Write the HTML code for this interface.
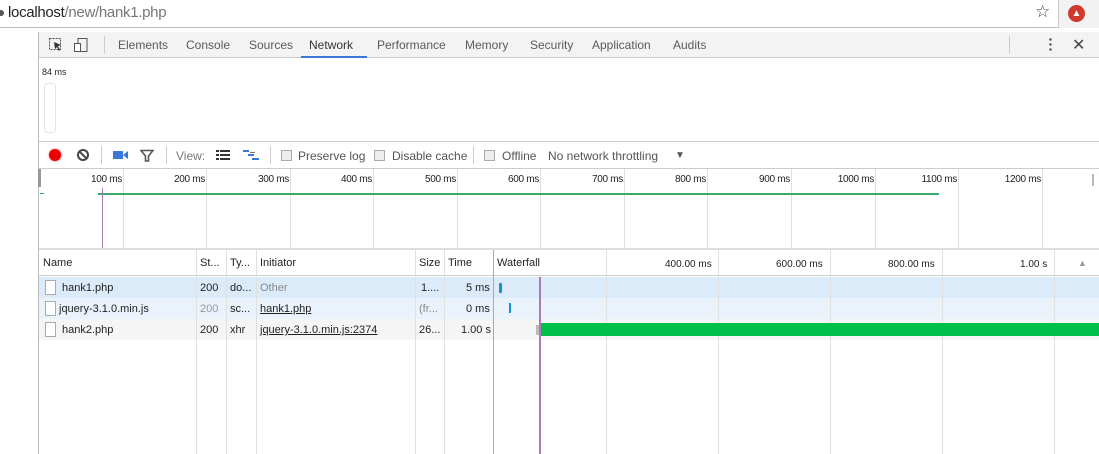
<!DOCTYPE html>
<html><head><meta charset="utf-8"><style>
*{margin:0;padding:0;box-sizing:border-box}
body{width:1099px;height:454px;overflow:hidden;background:#fff;font-family:"Liberation Sans",Arial,sans-serif;font-size:12px;color:#333;position:relative}
.a{position:absolute}
.t{position:absolute;top:38px;font-size:12px;color:#5a5a5a}
.tl{position:absolute;top:174px;font-size:10px;color:#222;text-align:right;width:60px;letter-spacing:-0.3px}
.vl{position:absolute;width:1px;background:#e0e0e0}
.cell{position:absolute;font-size:11px;color:#222;white-space:nowrap}
.cb{position:absolute;width:11px;height:11px;border:1px solid #aaa;background:#eee;top:150px}
.fi{position:absolute;left:45px;width:11px;height:15px;border:1px solid #aaa;background:#fff}
</style></head><body>
<div class="a" style="left:0;top:0;width:1099px;height:28px;background:#fff;border-bottom:1px solid #bbb"></div>
<div class="a" style="left:1058px;top:0;width:41px;height:28px;background:#f2f2f2;border-left:1px solid #ccc"></div>
<div class="a" style="left:-2px;top:10px;width:6px;height:6px;border-radius:3px;background:#555"></div>
<div class="a" style="left:8px;top:4px;font-size:15px;color:#222;letter-spacing:-0.3px">localhost<span style="color:#777">/new/hank1.php</span></div>
<div class="a" style="left:1035px;top:2px;font-size:17px;color:#444">☆</div>
<div class="a" style="left:1068px;top:5px;width:17px;height:17px;border-radius:50%;background:#d0392b;color:#fff;font-size:10px;text-align:center;line-height:17px">▲</div>
<div class="a" style="left:38px;top:32px;width:1px;height:422px;background:#bbb"></div>
<div class="a" style="left:39px;top:32px;width:1060px;height:26px;background:#f3f3f3;border-bottom:1px solid #ccc"></div>
<svg class="a" style="left:48px;top:37px" width="40" height="16"><rect x="1.5" y="1.5" width="11" height="11" fill="none" stroke="#555" stroke-dasharray="2 1"/><path d="M6 5 L13 8 L10 9 L12 13 L11 14 L9 10 L7 12Z" fill="#333"/><rect x="30" y="1.5" width="9" height="13" fill="none" stroke="#555"/><rect x="26.5" y="6.5" width="6" height="8" fill="#fff" stroke="#555"/></svg>
<div class="a" style="left:104px;top:36px;width:1px;height:18px;background:#ccc"></div>
<div class="t" style="left:118px">Elements</div>
<div class="t" style="left:186px">Console</div>
<div class="t" style="left:249px">Sources</div>
<div class="t" style="left:309px;color:#333">Network</div>
<div class="a" style="left:301px;top:56px;width:66px;height:2px;background:#3879d9"></div>
<div class="t" style="left:377px">Performance</div>
<div class="t" style="left:465px">Memory</div>
<div class="t" style="left:530px">Security</div>
<div class="t" style="left:592px">Application</div>
<div class="t" style="left:673px">Audits</div>
<div class="a" style="left:1009px;top:36px;width:1px;height:18px;background:#ccc"></div>
<div class="a" style="left:1049px;top:37px;width:3px;height:15px;background:radial-gradient(circle,#555 1px,transparent 1.5px) 0 0/3px 5px"></div>
<div class="a" style="left:1072px;top:35px;font-size:16px;color:#444">✕</div>
<div class="a" style="left:42px;top:67px;font-size:9px;color:#222">84 ms</div>
<div class="a" style="left:44px;top:83px;width:12px;height:50px;border:1px solid #e3e3e3;border-radius:3px"></div>
<div class="a" style="left:39px;top:141px;width:1060px;height:1px;background:#ccc"></div>
<div class="a" style="left:49px;top:149px;width:12px;height:12px;border-radius:50%;background:#e00;box-shadow:0 0 2px #f66"></div>
<div class="a" style="left:77px;top:149px;width:12px;height:12px;border-radius:50%;border:2px solid #444"></div>
<div class="a" style="left:79px;top:154px;width:8px;height:2px;background:#444;transform:rotate(45deg)"></div>
<div class="a" style="left:101px;top:146px;width:1px;height:18px;background:#ccc"></div>
<svg class="a" style="left:113px;top:150px" width="16" height="10"><rect x="0" y="1" width="10" height="8" fill="#3879d9"/><path d="M10 5 L15 1 V9Z" fill="#3879d9"/></svg>
<svg class="a" style="left:140px;top:149px" width="14" height="13"><path d="M1 1.5 H13 L8.5 7 V12 H5.5 V7Z" fill="none" stroke="#555" stroke-width="1.6"/></svg>
<div class="a" style="left:166px;top:146px;width:1px;height:18px;background:#ccc"></div>
<div class="a" style="left:176px;top:149px;font-size:12px;color:#777">View:</div>
<svg class="a" style="left:216px;top:150px" width="15" height="10"><g fill="#333"><rect x="0" y="0" width="3" height="2"/><rect x="4" y="0" width="10" height="2"/><rect x="0" y="4" width="3" height="2"/><rect x="4" y="4" width="10" height="2"/><rect x="0" y="8" width="3" height="2"/><rect x="4" y="8" width="10" height="2"/></g></svg>
<svg class="a" style="left:243px;top:150px" width="18" height="11"><g fill="#3879d9"><rect x="0" y="0" width="6" height="2"/><rect x="5" y="4" width="6" height="2"/><rect x="9" y="8" width="7" height="2"/></g><rect x="7" y="2" width="5" height="1" fill="#777"/></svg>
<div class="a" style="left:270px;top:146px;width:1px;height:18px;background:#ccc"></div>
<div class="cb" style="left:281px"></div>
<div class="a" style="left:298px;top:149px;color:#555">Preserve log</div>
<div class="cb" style="left:374px"></div>
<div class="a" style="left:392px;top:149px;color:#555">Disable cache</div>
<div class="a" style="left:473px;top:146px;width:1px;height:18px;background:#ccc"></div>
<div class="cb" style="left:484px"></div>
<div class="a" style="left:502px;top:149px;color:#555">Offline</div>
<div class="a" style="left:548px;top:149px;color:#555">No network throttling</div>
<div class="a" style="left:675px;top:150px;font-size:10px;color:#555">▼</div>
<div class="a" style="left:39px;top:168px;width:1060px;height:1px;background:#ccc"></div>
<div class="a" style="left:38px;top:169px;width:3px;height:18px;background:#999"></div>
<div class="vl" style="left:123px;top:169px;height:80px"></div>
<div class="vl" style="left:206px;top:169px;height:80px"></div>
<div class="vl" style="left:290px;top:169px;height:80px"></div>
<div class="vl" style="left:373px;top:169px;height:80px"></div>
<div class="vl" style="left:457px;top:169px;height:80px"></div>
<div class="vl" style="left:540px;top:169px;height:80px"></div>
<div class="vl" style="left:624px;top:169px;height:80px"></div>
<div class="vl" style="left:707px;top:169px;height:80px"></div>
<div class="vl" style="left:791px;top:169px;height:80px"></div>
<div class="vl" style="left:875px;top:169px;height:80px"></div>
<div class="vl" style="left:958px;top:169px;height:80px"></div>
<div class="vl" style="left:1042px;top:169px;height:80px"></div>
<div class="tl" style="left:62px">100 ms</div>
<div class="tl" style="left:145px">200 ms</div>
<div class="tl" style="left:229px">300 ms</div>
<div class="tl" style="left:312px">400 ms</div>
<div class="tl" style="left:396px">500 ms</div>
<div class="tl" style="left:479px">600 ms</div>
<div class="tl" style="left:563px">700 ms</div>
<div class="tl" style="left:646px">800 ms</div>
<div class="tl" style="left:730px">900 ms</div>
<div class="tl" style="left:814px">1000 ms</div>
<div class="tl" style="left:897px">1100 ms</div>
<div class="tl" style="left:981px">1200 ms</div>
<div class="a" style="left:1092px;top:174px;width:2px;height:12px;background:#bbb"></div>
<div class="a" style="left:40px;top:193px;width:4px;height:1px;background:#2a8"></div>
<div class="a" style="left:98px;top:193px;width:841px;height:2px;background:#3aaa6a"></div>
<div class="a" style="left:102px;top:188px;width:1px;height:60px;background:#a87cb8"></div>
<div class="a" style="left:39px;top:248px;width:1060px;height:2px;background:#ddd"></div>
<div class="a" style="left:39px;top:250px;width:1060px;height:26px;background:#fff;border-bottom:1px solid #ccc"></div>
<div class="a" style="left:39px;top:277px;width:1060px;height:21px;background:#dcebfa"></div>
<div class="a" style="left:39px;top:298px;width:1060px;height:21px;background:#eaf2fb"></div>
<div class="a" style="left:39px;top:319px;width:1060px;height:21px;background:#f5f5f5"></div>
<div class="vl" style="left:196px;top:250px;height:204px"></div>
<div class="vl" style="left:226px;top:250px;height:204px"></div>
<div class="vl" style="left:256px;top:250px;height:204px"></div>
<div class="vl" style="left:415px;top:250px;height:204px"></div>
<div class="vl" style="left:444px;top:250px;height:204px"></div>
<div class="a" style="left:493px;top:250px;width:1px;height:204px;background:#aaa"></div>
<div class="vl" style="left:606px;top:250px;height:204px"></div>
<div class="vl" style="left:718px;top:250px;height:204px"></div>
<div class="vl" style="left:830px;top:250px;height:204px"></div>
<div class="vl" style="left:942px;top:250px;height:204px"></div>
<div class="vl" style="left:1054px;top:250px;height:204px"></div>
<div class="cell" style="left:43px;top:257px">Name</div>
<div class="cell" style="left:200px;top:257px">St...</div>
<div class="cell" style="left:230px;top:257px">Ty...</div>
<div class="cell" style="left:260px;top:257px">Initiator</div>
<div class="cell" style="left:419px;top:257px">Size</div>
<div class="cell" style="left:448px;top:257px">Time</div>
<div class="cell" style="left:497px;top:257px">Waterfall</div>
<div class="cell" style="left:665px;top:259px;font-size:10px">400.00 ms</div>
<div class="cell" style="left:776px;top:259px;font-size:10px">600.00 ms</div>
<div class="cell" style="left:888px;top:259px;font-size:10px">800.00 ms</div>
<div class="cell" style="left:1020px;top:259px;font-size:10px">1.00 s</div>
<div class="cell" style="left:1078px;top:258px;font-size:9px;color:#999">▲</div>
<div class="fi" style="top:280px"></div>
<div class="fi" style="top:301px"></div>
<div class="fi" style="top:322px"></div>
<div class="cell" style="left:62px;top:282px">hank1.php</div>
<div class="cell" style="left:200px;top:282px">200</div>
<div class="cell" style="left:230px;top:282px">do...</div>
<div class="cell" style="left:260px;top:282px;color:#888">Other</div>
<div class="cell" style="left:421px;top:282px">1....</div>
<div class="cell" style="left:466px;top:282px">5 ms</div>
<div class="cell" style="left:59px;top:303px">jquery-3.1.0.min.js</div>
<div class="cell" style="left:200px;top:303px;color:#999">200</div>
<div class="cell" style="left:230px;top:303px">sc...</div>
<div class="cell" style="left:260px;top:303px;text-decoration:underline">hank1.php</div>
<div class="cell" style="left:419px;top:303px;color:#888">(fr...</div>
<div class="cell" style="left:466px;top:303px">0 ms</div>
<div class="cell" style="left:62px;top:324px">hank2.php</div>
<div class="cell" style="left:200px;top:324px">200</div>
<div class="cell" style="left:230px;top:324px">xhr</div>
<div class="cell" style="left:260px;top:324px;text-decoration:underline">jquery-3.1.0.min.js:2374</div>
<div class="cell" style="left:419px;top:324px">26...</div>
<div class="cell" style="left:461px;top:324px">1.00 s</div>
<div class="a" style="left:499px;top:283px;width:3px;height:10px;background:#1a8fd8;border-radius:1px"></div>
<div class="a" style="left:509px;top:303px;width:2px;height:10px;background:#1a8fd8"></div>
<div class="a" style="left:536px;top:325px;width:3px;height:10px;background:#bbb"></div>
<div class="a" style="left:539px;top:323px;width:560px;height:13px;background:#00c04a"></div>
<div class="a" style="left:539px;top:277px;width:2px;height:177px;background:#a87cb8"></div>
</body></html>
